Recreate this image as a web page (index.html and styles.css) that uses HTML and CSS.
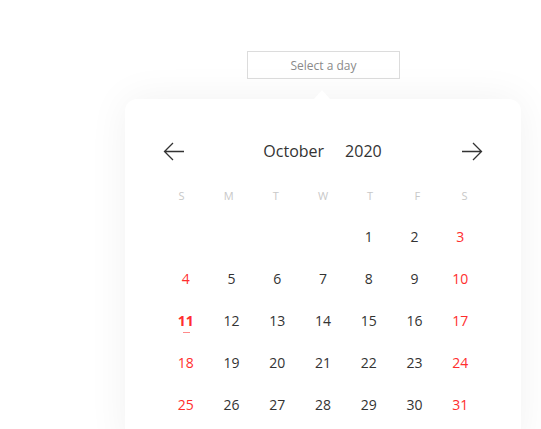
FILE: index.html
```html
<!DOCTYPE html>
<html>
<head>
<meta charset="utf-8">
<link rel="stylesheet" href="styles.css">
</head>
<body>
<div class="page">
  <div class="picker">
    <div class="input">Select a day</div>
    <div class="card">
      <div class="head">
        <svg class="arrow" width="21" height="19" viewBox="0 0 21 19"><path d="M21 9.5H1.5M10 1L1.5 9.5L10 18" fill="none" stroke="#333" stroke-width="1.3"/></svg>
        <div class="title"><span>October</span><span>2020</span></div>
        <svg class="arrow" width="21" height="19" viewBox="0 0 21 19"><path d="M0 9.5H19.5M11 1L19.5 9.5L11 18" fill="none" stroke="#333" stroke-width="1.3"/></svg>
      </div>
      <div class="weekdays">
        <span>S</span><span>M</span><span>T</span><span>W</span><span>T</span><span>F</span><span>S</span>
      </div>
      <div class="days">
        <span></span><span></span><span></span><span></span><span>1</span><span>2</span><span class="we">3</span>
        <span class="we">4</span><span>5</span><span>6</span><span>7</span><span>8</span><span>9</span><span class="we">10</span>
        <span class="we today">11</span><span>12</span><span>13</span><span>14</span><span>15</span><span>16</span><span class="we">17</span>
        <span class="we">18</span><span>19</span><span>20</span><span>21</span><span>22</span><span>23</span><span class="we">24</span>
        <span class="we">25</span><span>26</span><span>27</span><span>28</span><span>29</span><span>30</span><span class="we">31</span>
      </div>
    </div>
  </div>
</div>
</body>
</html>
```
FILE: styles.css
```css
html, body {
  margin: 0;
  background: #fff;
  font-family: "Open Sans", "Noto Sans", sans-serif;
  overflow: hidden;
  height: 429px;
}
.page {
  padding: 51px 0 0 125px;
}
.picker {
  width: 396px;
}
.input {
  width: 153px;
  height: 28px;
  margin: 0 auto 0 122px;
  box-sizing: border-box;
  border: 1px solid #dcdcdc;
  color: #8a8a8a;
  font-size: 12px;
  display: flex;
  align-items: center;
  justify-content: center;
}
.card {
  margin-top: 20px;
  position: relative;
  background: #fff;
  border-radius: 12px;
  box-shadow: 0 0 40px rgba(0, 0, 0, 0.06);
  padding: 40px 38px 24px;
}
.card::before {
  content: "";
  position: absolute;
  top: -9px;
  left: 189px;
  border-left: 8px solid transparent;
  border-right: 8px solid transparent;
  border-bottom: 9px solid #fff;
}
.head {
  display: flex;
  align-items: center;
  justify-content: space-between;
  height: 24px;
}
.arrow {
  display: block;
}
.title {
  display: flex;
  gap: 21px;
  font-size: 16px;
  color: #333;
  margin-left: -1px;
}
.weekdays {
  display: grid;
  grid-template-columns: repeat(7, 1fr);
  margin: 22px -5px 0;
  height: 20px;
  align-items: center;
  font-size: 11px;
  color: #c8c8c8;
  text-align: center;
}
.days {
  display: grid;
  grid-template-columns: repeat(7, 1fr);
  grid-auto-rows: 42px;
  margin-top: 10px;
  font-size: 14px;
  color: #333;
  text-align: center;
}
.days span {
  display: flex;
  align-items: center;
  justify-content: center;
  position: relative;
}
.days .we {
  color: #ff2e2e;
}
.days .today {
  font-weight: 700;
}
.days .today::after {
  content: "";
  position: absolute;
  left: 50%;
  top: 33px;
  width: 7px;
  margin-left: -3px;
  height: 1px;
  background: #ff8a8a;
}
```
